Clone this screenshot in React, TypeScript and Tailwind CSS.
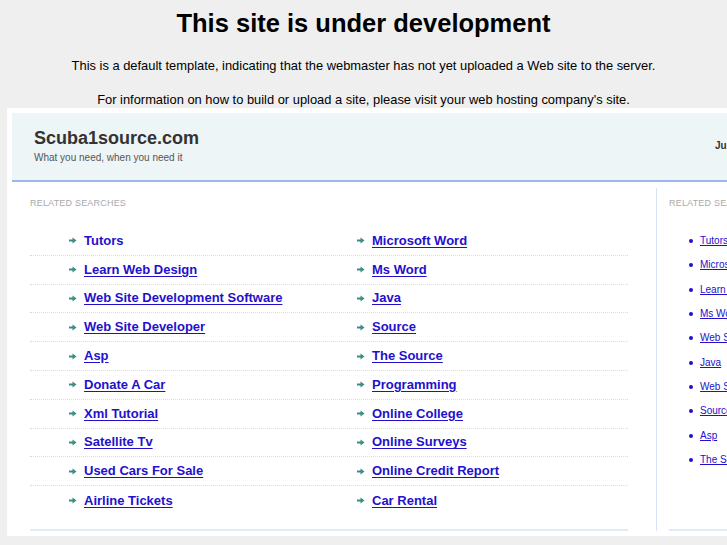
import React from "react";

const left: string[][] = [
  ["Tutors", "Microsoft Word"],
  ["Learn Web Design", "Ms Word"],
  ["Web Site Development Software", "Java"],
  ["Web Site Developer", "Source"],
  ["Asp", "The Source"],
  ["Donate A Car", "Programming"],
  ["Xml Tutorial", "Online College"],
  ["Satellite Tv", "Online Surveys"],
  ["Used Cars For Sale", "Online Credit Report"],
  ["Airline Tickets", "Car Rental"],
];

const right = [
  "Tutors",
  "Microsoft Word",
  "Learn Web Design",
  "Ms Word",
  "Web Site Development Software",
  "Java",
  "Web Site Developer",
  "Source",
  "Asp",
  "The Source",
];

function Arrow() {
  return (
    <svg width="8" height="7" viewBox="0 0 8 7" className="shrink-0">
      <rect x="0" y="2.5" width="4" height="2" fill="#3b8a84" />
      <polygon points="3.5,0.5 7.5,3.5 3.5,6.5" fill="#3b8a84" />
    </svg>
  );
}

function Item({ text, first }: { text: string; first?: boolean }) {
  return (
    <div className="flex items-center gap-[7px]">
      <Arrow />
      <a
        href="#"
        className={
          "text-[13px] font-bold leading-[16px] text-[#2410cc] " +
          (first ? "no-underline" : "underline underline-offset-2")
        }
      >
        {text}
      </a>
    </div>
  );
}

export default function App() {
  return (
    <div
      className="w-full min-h-[545px] h-[545px] overflow-hidden bg-[#efefef]"
      style={{ fontFamily: '"Liberation Sans", Arial, Helvetica, sans-serif' }}
    >
      <div className="flex flex-col items-center pt-[8px]">
        <h1 className="text-[25.5px] font-bold leading-[30px] text-black">
          This site is under development
        </h1>
        <p className="mt-[20px] text-[12.9px] leading-[16px] text-black">
          This is a default template, indicating that the webmaster has not yet uploaded a Web site to the server.
        </p>
        <p className="mt-[18px] text-[12.9px] leading-[16px] text-black">
          For information on how to build or upload a site, please visit your web hosting company's site.
        </p>
      </div>

      <div className="ml-[7px] w-[1000px] bg-white p-[5px]">
        <div className="flex h-[69px] border-b-2 border-[#9cb8ea] bg-[#eef5f7] pl-[22px]">
          <div className="w-[681px] pt-[14px]">
            <div className="text-[18px] font-bold leading-[22px] text-[#333]">Scuba1source.com</div>
            <div className="mt-[3px] text-[10px] leading-[12px] text-[#555]">
              What you need, when you need it
            </div>
          </div>
          <div className="pt-[27px] text-[10px] font-bold leading-[12px] text-[#333] whitespace-nowrap">
            June 2012
          </div>
        </div>

        <div className="flex pt-[6px] pl-[18px]">
          <div className="w-[598px] pt-[10px]">
            <div className="text-[9px] leading-[11px] tracking-[0.2px] text-[#aaa]">RELATED SEARCHES</div>
            <div className="mt-[18px]">
              {left.map((row, i) => (
                <div
                  key={i}
                  className={
                    "grid h-[28.8px] grid-cols-[288px_1fr] items-center pl-[39px] " +
                    (i < left.length - 1 ? "border-b border-dotted border-[#cfdcf3]" : "")
                  }
                >
                  <Item text={row[0]} first={i === 0} />
                  <Item text={row[1]} />
                </div>
              ))}
            </div>
            <div className="mt-[14px] h-[2px] bg-[#e1ebf8]" />
          </div>

          <div className="ml-[28px] w-[300px] border-l border-[#d6e3f6] pl-[12px] pt-[10px]">
            <div className="text-[9px] leading-[11px] tracking-[0.2px] text-[#aaa]">RELATED SEARCHES</div>
            <ul className="mt-[20px] pl-[20px]">
              {right.map((t) => (
                <li key={t} className="flex h-[24.3px] items-center gap-[7px]">
                  <span className="h-[4px] w-[4px] shrink-0 rounded-full bg-[#2410cc]" />
                  <a href="#" className="text-[10px] leading-[12px] text-[#2410cc] underline whitespace-nowrap">
                    {t}
                  </a>
                </li>
              ))}
            </ul>
            <div className="mt-[57px] h-[2px] bg-[#e1ebf8]" />
          </div>
        </div>
      </div>
    </div>
  );
}
